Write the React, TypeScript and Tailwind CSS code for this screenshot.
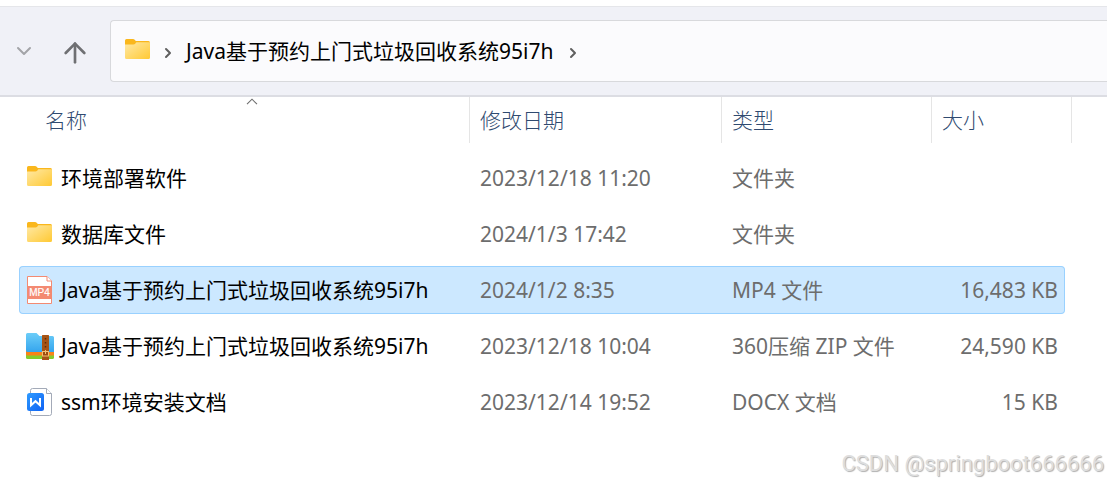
import { ArrowUp, ChevronDown, ChevronRight } from 'lucide-react';

type IconKind = 'folder' | 'mp4' | 'zip' | 'docx';

type FileEntry = {
  id: number;
  name: string;
  modified: string;
  type: string;
  size?: string;
  icon: IconKind;
  selected?: boolean;
};

const FILES: FileEntry[] = [
  { id: 1, name: '环境部署软件', modified: '2023/12/18 11:20', type: '文件夹', icon: 'folder' },
  { id: 2, name: '数据库文件', modified: '2024/1/3 17:42', type: '文件夹', icon: 'folder' },
  {
    id: 3,
    name: 'Java基于预约上门式垃圾回收系统95i7h',
    modified: '2024/1/2 8:35',
    type: 'MP4 文件',
    size: '16,483 KB',
    icon: 'mp4',
    selected: true,
  },
  {
    id: 4,
    name: 'Java基于预约上门式垃圾回收系统95i7h',
    modified: '2023/12/18 10:04',
    type: '360压缩 ZIP 文件',
    size: '24,590 KB',
    icon: 'zip',
  },
  {
    id: 5,
    name: 'ssm环境安装文档',
    modified: '2023/12/14 19:52',
    type: 'DOCX 文档',
    size: '15 KB',
    icon: 'docx',
  },
];

export default function App() {
  return (
    <div className="relative min-h-screen overflow-hidden bg-white pt-[6px] font-['Noto_Sans','Noto_Sans_CJK_SC',sans-serif] text-[21px] leading-7 text-[#6d6d6d]">
      <Toolbar />
      <FileTable />
      <p className="absolute right-[3px] bottom-1 font-['Roboto',sans-serif] text-[22px] leading-8 text-[#dedede] [text-shadow:1px_1px_1px_#b0b0b0]">
        CSDN @springboot666666
      </p>
    </div>
  );
}

function Toolbar() {
  return (
    <header className="flex items-center border-t border-b-2 border-t-[#e5e6ea] border-b-[#dcdde3] bg-[#f0f1f7] py-[13px] pl-4">
      <button aria-label="Recent locations" className="flex w-4 justify-center text-[#a3a4a8]">
        <ChevronDown className="h-6 w-6 shrink-0" strokeWidth={2} />
      </button>
      <button aria-label="Up" className="mr-[19px] ml-[27px] text-[#6f7073]">
        <ArrowUp className="mt-1 h-8 w-8" strokeWidth={2} />
      </button>
      <nav
        aria-label="Address"
        className="flex h-[62px] flex-1 items-center rounded-l border border-r-0 border-[#d8d9dc] bg-[#fbfbfd] pl-[14px] text-black"
      >
        <FolderIcon />
        <ChevronRight className="mx-[10px] mt-1 h-4 w-4 text-[#5f5f5f]" strokeWidth={3} />
        <button>Java基于预约上门式垃圾回收系统95i7h</button>
        <ChevronRight className="mt-1 ml-3 h-4 w-4 text-[#5f5f5f]" strokeWidth={3} />
      </nav>
    </header>
  );
}

function FileTable() {
  return (
    <main className="pl-[19px]">
      <table className="w-full table-fixed text-left">
        <colgroup>
          <col />
          <col className="w-[252px]" />
          <col className="w-[210px]" />
          <col className="w-[140px]" />
          <col className="w-[35px]" />
        </colgroup>
        <thead className="text-[#2f4a70]">
          <tr className="h-[53px] align-top">
            <th className="p-0 font-light" aria-sort="ascending">
              <button className="relative flex h-[46px] w-full items-center border-r border-[#e5e5e5] pl-[26px]">
                名称
                <SortCaret />
              </button>
            </th>
            <HeaderCell label="修改日期" />
            <HeaderCell label="类型" />
            <HeaderCell label="大小" />
            <td />
          </tr>
        </thead>
        <tbody>
          {FILES.map((file) => (
            <FileRow key={file.id} file={file} />
          ))}
        </tbody>
      </table>
    </main>
  );
}

function SortCaret() {
  return (
    <svg className="absolute top-px left-1/2 ml-0.5 h-[7px] w-3" viewBox="0 0 12 7" aria-hidden="true">
      <path d="M1 6.200L6 1.200L11 6.200" fill="none" stroke="#6d6d6d" strokeWidth="1.100" />
    </svg>
  );
}

function HeaderCell({ label }: { label: string }) {
  return (
    <th className="p-0 font-light">
      <button className="flex h-[46px] w-full items-center border-r border-[#e5e5e5] pl-[10px]">
        {label}
      </button>
    </th>
  );
}

function FileRow({ file }: { file: FileEntry }) {
  const tone = file.selected ? 'border-[#99d1ff] bg-[#cce8ff]' : 'border-transparent';

  return (
    <tr className="h-14">
      <td className="p-0">
        <div className={`flex h-12 items-center rounded-l-sm border-y border-l pl-[6px] text-black ${tone}`}>
          <span className="mr-2 flex w-[27px] justify-center">
            <FileIcon kind={file.icon} />
          </span>
          {file.name}
        </div>
      </td>
      <td className="p-0">
        <div className={`flex h-12 items-center border-y pl-[10px] ${tone}`}>{file.modified}</div>
      </td>
      <td className="p-0">
        <div className={`flex h-12 items-center border-y pl-[10px] ${tone}`}>{file.type}</div>
      </td>
      <td className="p-0">
        <div
          className={`mr-[7px] flex h-12 items-center justify-end rounded-r-sm border-y border-r pr-[6px] ${tone}`}
        >
          {file.size}
        </div>
      </td>
      <td />
    </tr>
  );
}

function FileIcon({ kind }: { kind: IconKind }) {
  if (kind === 'mp4') return <Mp4Icon />;
  if (kind === 'zip') return <ZipIcon />;
  if (kind === 'docx') return <DocxIcon />;
  return <FolderIcon />;
}

function FolderIcon() {
  return (
    <svg className="mb-1 h-5 w-[25px] shrink-0" viewBox="0 0 25 20" aria-hidden="true">
      <defs>
        <linearGradient id="folder" x1="0" y1="0" x2="1" y2="1">
          <stop offset="0" stopColor="#ffe9a6" />
          <stop offset="1" stopColor="#ffc933" />
        </linearGradient>
      </defs>
      <path d="M0 1.500Q0 0 1.500 0H8q1 0 1.700.8L10.800 2H23.500Q25 2 25 3.500V10H0Z" fill="#fab71c" />
      <path d="M0 5.500H8.500q1 0 1.700-.8L11.300 3.200H25V18.500Q25 20 23.500 20H1.500Q0 20 0 18.500Z" fill="url(#folder)" />
    </svg>
  );
}

function Mp4Icon() {
  return (
    <svg className="h-7 w-[25px] shrink-0" viewBox="0 0 25 28" aria-hidden="true">
      <path d="M.5.5H20L24.500 5V27.500H.5Z" fill="#fff" stroke="#f38a72" />
      <path d="M20 .5V5H24.500" fill="#fff" stroke="#f38a72" />
      <rect y="10" width="25" height="13" fill="#f38a72" />
      <text
        x="12.500"
        y="20"
        textAnchor="middle"
        fontFamily="Liberation Sans, sans-serif"
        fontSize="10"
        fill="#fff"
        stroke="#fff"
        strokeWidth=".2"
      >
        MP4
      </text>
    </svg>
  );
}

function ZipIcon() {
  return (
    <svg className="h-[27px] w-7 shrink-0" viewBox="0 0 28 27" aria-hidden="true">
      <defs>
        <linearGradient id="zip" x1="0" y1="0" x2="0" y2="1">
          <stop offset="0" stopColor="#6ccdf8" />
          <stop offset="1" stopColor="#35a5ee" />
        </linearGradient>
      </defs>
      <path d="M0 20H28V24.500Q28 26 26.500 26H1.500Q0 26 0 24.500Z" fill="#86cc2c" />
      <path d="M0 17H28V22.500H1.500Q0 22.500 0 21Z" fill="#f98318" />
      <path d="M0 1.500Q0 0 1.500 0H10.500L13.500 3H26.500Q28 3 28 4.500V19H1.500Q0 19 0 17.500Z" fill="url(#zip)" />
      <rect x="16" y="2" width="7" height="25" rx=".5" fill="#a65416" />
      <path d="M19.500 5V16" stroke="#5f2c08" strokeWidth="1.500" strokeDasharray="1.500 2.500" />
      <rect x="16.500" y="18.500" width="6" height="4.500" fill="#9b4b10" stroke="#f5c071" />
      <path d="M19.500 17V21" stroke="#f5c071" />
    </svg>
  );
}

function DocxIcon() {
  return (
    <svg className="h-7 w-[25px] shrink-0" viewBox="0 0 25 28" aria-hidden="true">
      <defs>
        <linearGradient id="docx" x1="0" y1="0" x2="1" y2="1">
          <stop offset="0" stopColor="#2f9bff" />
          <stop offset="1" stopColor="#0f62f4" />
        </linearGradient>
      </defs>
      <path
        d="M5.500.5H19.500L24.500 5.500V25.500Q24.500 27.500 22.500 27.500H5.500Q3.500 27.500 3.500 25.500V2.500Q3.500.5 5.500.5Z"
        fill="#fff"
        stroke="#a3aab8"
      />
      <path d="M19.500.5V5.500H24.500" fill="#fff" stroke="#a3aab8" />
      <rect y="5" width="17" height="18" rx="2.500" fill="url(#docx)" />
      <path d="M4 10V17.200L8.500 13.200L13 17.200V10" fill="none" stroke="#fff" strokeWidth="2" />
    </svg>
  );
}
